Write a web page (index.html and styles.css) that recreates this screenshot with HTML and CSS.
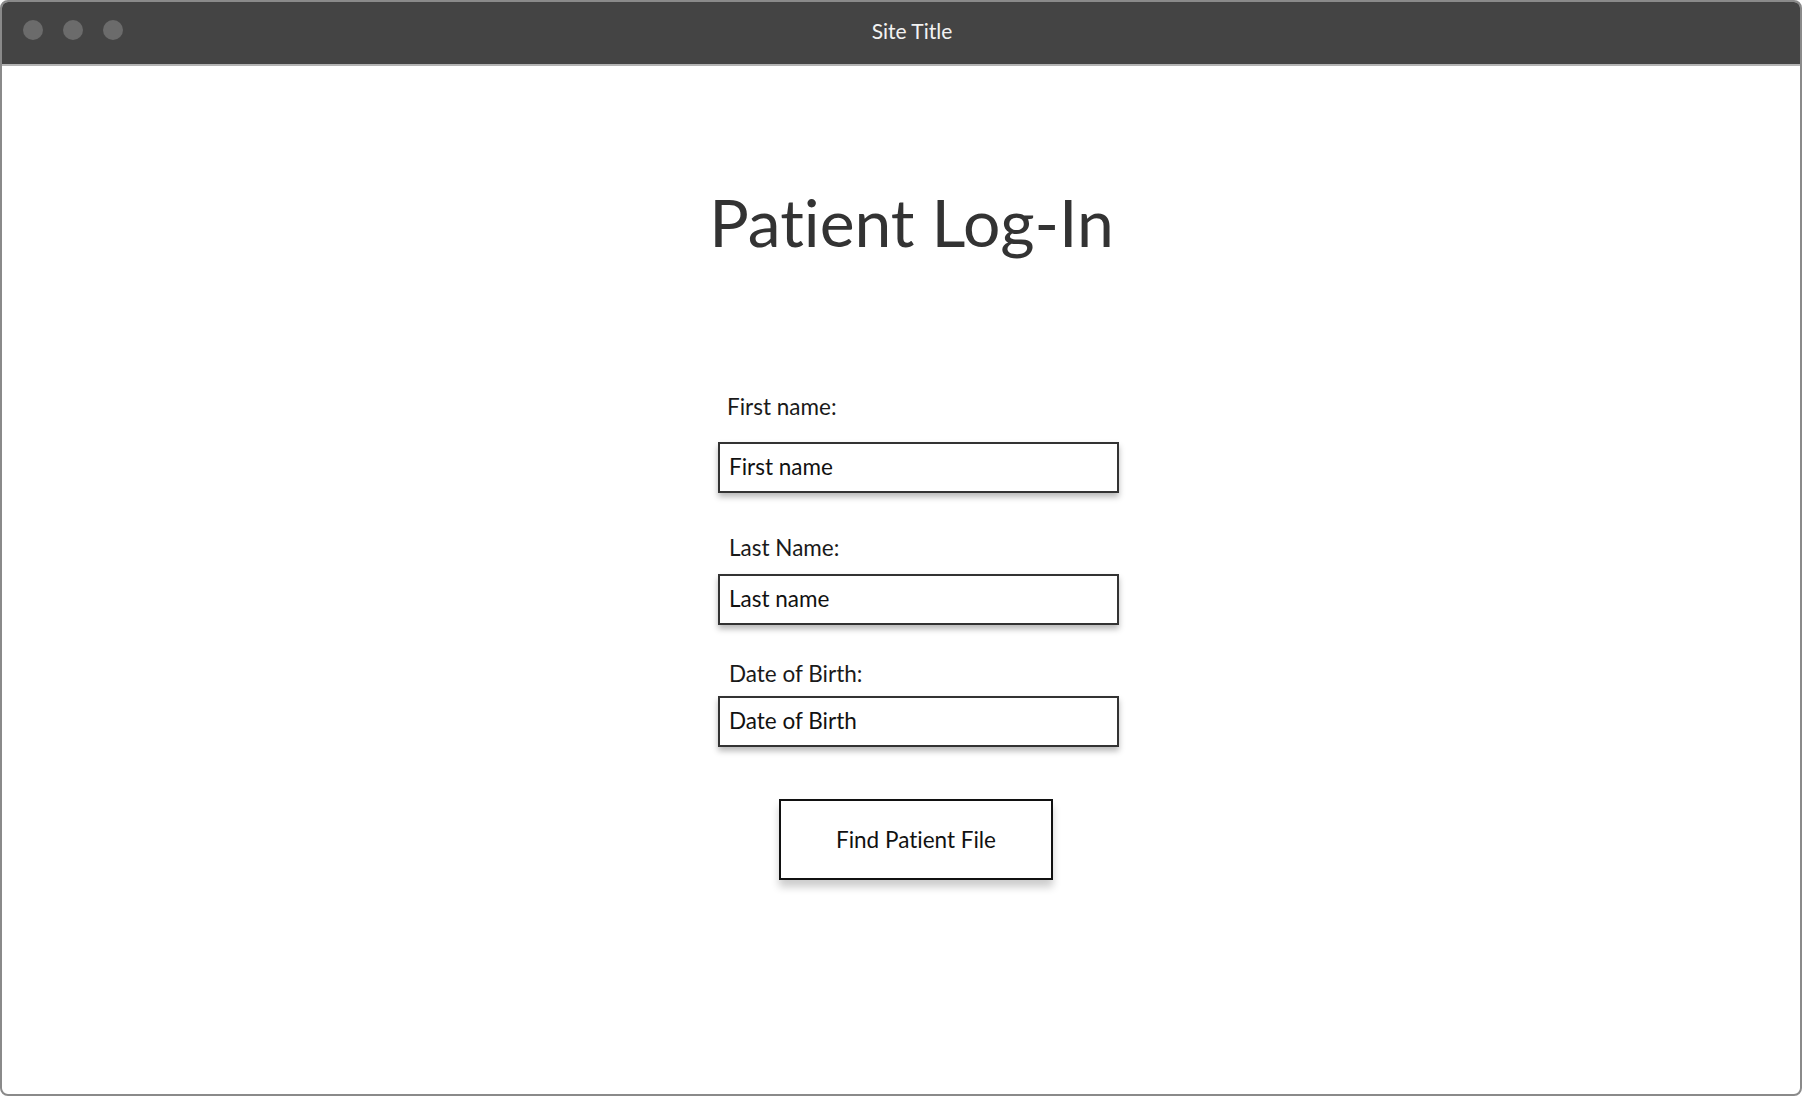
FILE: index.html
```html
<!DOCTYPE html>
<html lang="en">
<head>
<meta charset="utf-8">
<title>Patient Log-In</title>
<link rel="stylesheet" href="styles.css">
</head>
<body>
<div class="window">
  <header class="titlebar">
    <div class="lights">
      <span class="light"></span>
      <span class="light"></span>
      <span class="light"></span>
    </div>
    <div class="site-title">Site Title</div>
    <div class="spacer"></div>
  </header>
  <main class="content">
    <h1 class="heading">Patient Log-In</h1>
    <form class="form">
      <label class="label label-first" for="fn">First name:</label>
      <input class="field field-first" id="fn" type="text" placeholder="First name">
      <label class="label label-last" for="ln">Last Name:</label>
      <input class="field field-last" id="ln" type="text" placeholder="Last name">
      <label class="label label-dob" for="dob">Date of Birth:</label>
      <input class="field field-dob" id="dob" type="text" placeholder="Date of Birth">
      <button class="submit" type="button">Find Patient File</button>
    </form>
  </main>
</div>
</body>
</html>
```
FILE: styles.css
```css
html, body {
  margin: 0;
  padding: 0;
  background: #ffffff;
}

body {
  font-family: "Lato", "Open Sans", sans-serif;
  font-variant-ligatures: none;
}

.window {
  box-sizing: border-box;
  width: 1802px;
  height: 1096px;
  border: 2px solid #8a8a8a;
  border-radius: 8px;
  overflow: hidden;
  display: flex;
  flex-direction: column;
  background: #ffffff;
}

.titlebar {
  height: 62px;
  flex: none;
  background: #444444;
  border-bottom: 2px solid #b4b4b4;
  display: grid;
  grid-template-columns: 1fr auto 1fr;
  align-items: center;
}

.lights {
  display: flex;
  gap: 20px;
  padding-left: 21px;
  margin-top: -6px;
}

.light {
  width: 20px;
  height: 20px;
  border-radius: 50%;
  background: #6b6b6b;
}

.site-title {
  color: #f2f2f2;
  font-size: 21px;
  margin-left: 22px;
  margin-top: -6px;
}

.content {
  display: flex;
  flex-direction: column;
  align-items: center;
}

.heading {
  margin: 116px 0 0 21px;
  font-size: 66px;
  line-height: 80px;
  font-weight: 400;
  color: #333333;
}

.form {
  width: 401px;
  margin: 131px 0 0 35px;
  display: flex;
  flex-direction: column;
}

.label {
  font-size: 22.5px;
  line-height: 28px;
  color: #1a1a1a;
  padding-left: 11px;
}

.label-first {
  padding-left: 9px;
  margin-bottom: 21px;
}

.label-last {
  margin-top: 41px;
  margin-bottom: 12px;
}

.label-dob {
  margin-top: 35px;
  margin-bottom: 8px;
}

.field {
  box-sizing: border-box;
  width: 401px;
  height: 51px;
  margin: 0;
  border: 2px solid #333333;
  border-radius: 0;
  padding: 0 0 2px 9px;
  font-family: inherit;
  font-variant-ligatures: none;
  font-size: 22.5px;
  color: #111111;
  background: #ffffff;
  box-shadow: 0 4px 6px rgba(0, 0, 0, 0.28);
  outline: none;
}

.field::placeholder {
  color: #111111;
  opacity: 1;
}

.submit {
  box-sizing: border-box;
  align-self: flex-start;
  width: 274px;
  height: 81px;
  margin: 52px 0 0 61px;
  border: 2px solid #111111;
  border-radius: 0;
  background: #ffffff;
  font-family: inherit;
  font-variant-ligatures: none;
  font-size: 22.5px;
  color: #111111;
  box-shadow: 0 7px 8px rgba(0, 0, 0, 0.2);
}
```
